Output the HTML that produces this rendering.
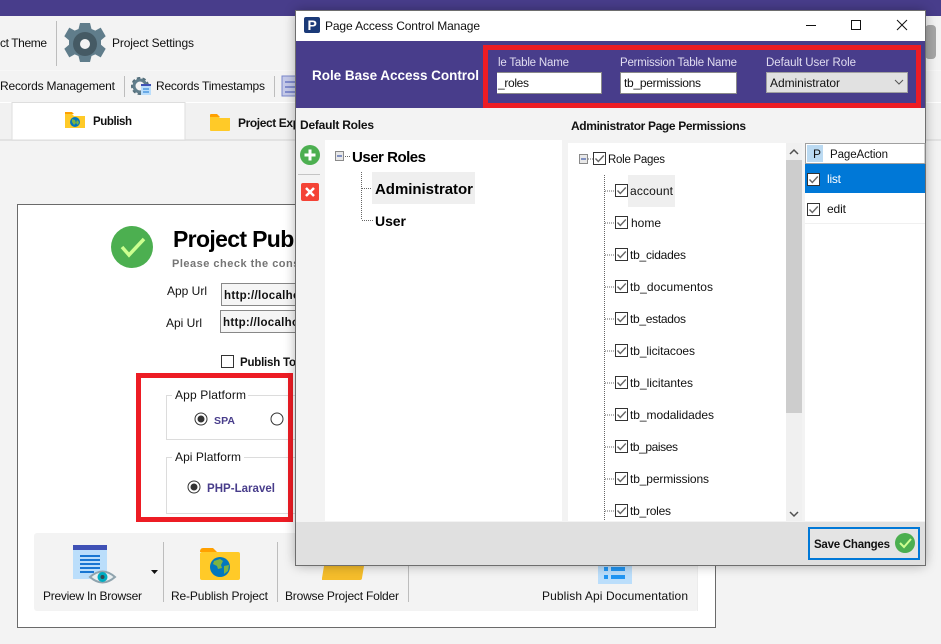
<!DOCTYPE html>
<html><head><meta charset="utf-8"><style>
html,body{margin:0;padding:0;background:#f3f3f3;overflow:hidden}
svg{display:block}
text{font-family:"Liberation Sans",sans-serif;font-size:12px;fill:#111}
.b{font-weight:bold}
.s{font-size:11.500px}
.w{fill:#fff}
.l{fill:#e0dcf0;font-size:11.500px}
.p{fill:#483d8b;font-weight:bold;font-size:11.500px}
.t{font-size:15px;font-weight:bold;fill:#000}
</style></head><body>
<svg xmlns="http://www.w3.org/2000/svg" width="941" height="644" viewBox="0 0 941 644">
<defs>
<filter id="s" x="-5%" y="-5%" width="110%" height="110%"><feGaussianBlur stdDeviation="6"/></filter>
<g id="c"><rect x="0.500" y="0.500" width="12" height="12" fill="#fff" stroke="#333"/><path d="M2.500 6.500l2.800 3 5.500-6" fill="none" stroke="#666" stroke-width="1.400"/></g>
</defs>
<rect width="941" height="644" fill="#f3f3f3"/>
<rect width="941" height="16" fill="#483d8b"/>
<rect x="925" y="25" width="11" height="34" rx="4" fill="#a6a6a6"/>
<rect y="70" width="941" height="1" fill="#f7f7f7"/>
<rect y="102" width="941" height="1" fill="#fff"/>
<rect y="103" width="941" height="36" fill="#f1f1f1"/>
<rect y="139" width="941" height="2" fill="#e2e2e2"/>

<text x="0" y="47" textLength="47">ct Theme</text>
<rect x="56" y="21" width="1" height="45" fill="#bdbdbd"/>
<path d="M80 23h10l1.500 6 3.800 1.600 5.400-3 5 8.600-4.700 4.100v4.400l4.700 4.100-5 8.600-5.400-3-3.800 1.600-1.500 6h-10l-1.500-6-3.800-1.600-5.400 3-5-8.600 4.700-4.100v-4.400l-4.700-4.100 5-8.600 5.400 3 3.800-1.600z" fill="#607d8b"/>
<circle cx="85" cy="44" r="12" fill="#455a64"/><circle cx="85" cy="44" r="5" fill="#f3f3f3"/>
<text x="112" y="47" textLength="82">Project Settings</text>

<text x="0" y="90" textLength="115">Records Management</text>
<rect x="124" y="76" width="1" height="21" fill="#bdbdbd"/>
<circle cx="140" cy="86" r="7" fill="none" stroke="#546e7a" stroke-width="4" stroke-dasharray="3 2"/><circle cx="140" cy="86" r="6" fill="none" stroke="#607d8b" stroke-width="3"/>
<rect x="141" y="84" width="10" height="11" fill="#bbdefb"/><rect x="141" y="84" width="10" height="2" fill="#3f51b5"/><path d="M143 89h6M143 92h6" stroke="#1976d2"/>
<text x="156" y="90" textLength="109">Records Timestamps</text>
<rect x="274" y="76" width="1" height="21" fill="#bdbdbd"/>
<rect x="282" y="76" width="16" height="20" fill="#c5cae9" stroke="#7986cb"/><path d="M285 82h10M285 87h10M285 92h10" stroke="#3f51b5"/>

<rect x="12" y="102.500" width="173" height="37.500" fill="#fff" stroke="#dedede"/>
<path d="M65 114h7l2 2h11v12H65z" fill="#ffca28"/><path d="M65 112h7l2 2H65z" fill="#ffa000"/><circle cx="75" cy="122" r="5" fill="#0277bd"/><path d="M72 119l3 1 1 3-2 2-2-3zM77 120l2 2-1 3-2-2z" fill="#7cb342"/>
<text x="93" y="125" class="b s" textLength="39">Publish</text>
<path d="M210 116h8l2 2h10v12q0 1-1 1h-18q-1 0-1-1z" fill="#ffca28"/><path d="M210 115q0-1 1-1h6l3 3h-10z" fill="#ffa000"/>
<text x="238" y="127" class="b" textLength="62">Project Exp</text>

<rect x="17.500" y="204.500" width="698" height="423" fill="#fff" stroke="#6a6a6a"/>
<circle cx="132" cy="247" r="21" fill="#4caf50"/><path d="M122 247l7 8 15-16" fill="none" stroke="#ccff90" stroke-width="3.500"/>
<text x="173" y="247" class="b" style="font-size:23px;fill:#000" textLength="127">Project Publ</text>
<text x="172" y="267" class="b" style="font-size:11px;fill:#757575" textLength="134">Please check the conse</text>
<text x="167" y="295" textLength="40">App Url</text>
<text x="166" y="327" textLength="36">Api Url</text>
<rect x="221.500" y="283.500" width="90" height="22" fill="#f5f5f5" stroke="#888"/>
<rect x="220.500" y="310.500" width="90" height="22" fill="#f5f5f5" stroke="#888"/>
<text x="224" y="299" class="b s" textLength="76">http://localho</text>
<text x="223" y="326" class="b s" textLength="76">http://localho</text>
<rect x="221.500" y="355.500" width="12" height="12" fill="#fff" stroke="#333"/>
<text x="240" y="366" class="b s" textLength="56">Publish To</text>

<rect x="166.500" y="395.500" width="170" height="44" fill="#fff" stroke="#dcdcdc"/>
<rect x="172" y="390" width="76" height="10" fill="#fff"/>
<text x="175" y="399" textLength="71">App Platform</text>
<circle cx="201" cy="419" r="6" fill="#fff" stroke="#333"/><circle cx="201" cy="419" r="3.500" fill="#333"/>
<text x="214" y="424" class="p" style="font-size:10.500px" textLength="21">SPA</text>
<circle cx="277" cy="419" r="6" fill="#fff" stroke="#333"/>
<rect x="166.500" y="457.500" width="170" height="56" fill="#fff" stroke="#dcdcdc"/>
<rect x="172" y="452" width="72" height="10" fill="#fff"/>
<text x="175" y="461" textLength="66">Api Platform</text>
<circle cx="194" cy="487" r="6" fill="#fff" stroke="#333"/><circle cx="194" cy="487" r="3.500" fill="#333"/>
<text x="207" y="492" class="p" textLength="68">PHP-Laravel</text>
<rect x="138.500" y="375.500" width="152" height="144" fill="none" stroke="#ed1c24" stroke-width="5"/>

<rect x="34" y="533" width="664" height="78" rx="3" fill="#f3f3f3"/>
<rect x="73" y="545" width="34" height="34" fill="#bbdefb"/><rect x="73" y="545" width="34" height="5" fill="#3f51b5"/>
<path d="M80 556h20M80 560h20M80 564h20M80 568h20M80 572h14" stroke="#1976d2" stroke-width="2"/>
<path d="M90 577q12.500-11 25 0q-12.500 11-25 0z" fill="#e8eef0" stroke="#90a4ae" stroke-width="2"/><circle cx="102.500" cy="577" r="5" fill="#00acc1"/><circle cx="102.500" cy="577" r="2" fill="#37474f"/>
<path d="M151 570h7l-3.500 4z" fill="#111"/>
<text x="43" y="600" textLength="99">Preview In Browser</text>
<rect x="163" y="542" width="1" height="60" fill="#bdbdbd"/>
<path d="M200 552q0-4 3-4h10l4 4z" fill="#ffa000"/><rect x="200" y="552" width="40" height="28" rx="2" fill="#ffca28"/>
<circle cx="220" cy="567" r="10" fill="#0277bd"/><path d="M214 561l6-2 3 2-2 4 1 3-4 1-1-3-4-2zM224 566l5-1-1 6-4 3z" fill="#7cb342"/>
<text x="171" y="600" textLength="97">Re-Publish Project</text>
<rect x="277" y="542" width="1" height="60" fill="#bdbdbd"/>
<path d="M322 580h38q2 0 2-2l3-18h-40l-3 18z" fill="#f5bd2b"/>
<text x="285" y="600" textLength="114">Browse Project Folder</text>
<rect x="408" y="542" width="1" height="60" fill="#bdbdbd"/>
<rect x="598" y="560" width="34" height="24" fill="#bbdefb"/>
<path d="M604 567h4v4h-4zM611 567h14v4h-14zM604 575h4v4h-4zM611 575h14v4h-14z" fill="#2196f3"/>
<text x="542" y="600" textLength="146">Publish Api Documentation</text>
<rect x="697" y="533" width="1" height="78" fill="#ececec"/>

<!-- dialog -->
<rect x="296" y="11" width="629" height="554" fill="#000" opacity=".35" filter="url(#s)"/>
<rect x="295.500" y="10.500" width="630" height="555" fill="#f3f3f3" stroke="#6e6e6e"/>
<rect x="296" y="11" width="629" height="30" fill="#fff"/>
<rect x="304" y="17" width="16" height="16" rx="2" fill="#1b3a78"/>
<text x="307.500" y="30" class="b w" style="font-size:14px">P</text>
<text x="325" y="30" textLength="155">Page Access Control Manage</text>
<rect x="806" y="25" width="10" height="1" fill="#111"/>
<rect x="851.500" y="20.500" width="9" height="9" fill="none" stroke="#111"/>
<path d="M897 20l10 10M907 20l-10 10" stroke="#111" fill="none"/>

<rect x="296" y="41" width="629" height="67" fill="#483d8b"/>
<text x="312" y="80" class="b w" style="font-size:13.500px" textLength="167">Role Base Access Control</text>
<text x="498" y="66" class="l" textLength="71">le Table Name</text>
<rect x="497.500" y="72.500" width="104" height="21" fill="#fff" stroke="#8a8a8a"/><rect x="497" y="73" width="1" height="20" fill="#fff"/>
<text x="498" y="87" textLength="31">_roles</text>
<text x="620" y="66" class="l" textLength="117">Permission Table Name</text>
<rect x="620.500" y="72.500" width="116" height="21" fill="#fff" stroke="#8a8a8a"/>
<text x="624" y="87" textLength="77">tb_permissions</text>
<text x="766" y="66" class="l" textLength="90">Default User Role</text>
<rect x="766.500" y="72.500" width="141" height="20" fill="#e1e1e1" stroke="#a0a0a0"/>
<text x="770" y="87" textLength="70">Administrator</text>
<path d="M895 80l4 4 4-4" fill="none" stroke="#555"/>
<rect x="485.500" y="47.500" width="433" height="58" fill="none" stroke="#ed1c24" stroke-width="5"/>

<text x="300" y="129" class="b" textLength="74">Default Roles</text>
<text x="571" y="130" class="b" textLength="175">Administrator Page Permissions</text>
<circle cx="310" cy="155" r="10" fill="#4caf50"/><path d="M304.500 155h11M310 149.500v11" stroke="#fff" stroke-width="3"/>
<rect x="298" y="174" width="22" height="1" fill="#c4c4c4"/>
<rect x="301" y="183" width="18" height="18" rx="2" fill="#f44336"/><path d="M306 188l8 8M314 188l-8 8" stroke="#fff" stroke-width="2.500"/>

<rect x="325" y="140" width="237" height="381" fill="#fff"/>
<rect x="335.500" y="151.500" width="8" height="9" fill="#e8e8e8" stroke="#8a8a8a"/><path d="M337 156h5" stroke="#1a3a9a"/>
<path d="M345 156.500h6M361.500 172v48M362 188.500h10M362 220.500h11" stroke="#666" stroke-dasharray="1 1" fill="none"/>
<text x="352" y="162" class="t" textLength="74">User Roles</text>
<rect x="372" y="172" width="103" height="32" fill="#efefef"/>
<text x="375" y="194" class="t" textLength="98">Administrator</text>
<text x="375" y="226" class="t" style="font-size:14px" textLength="31">User</text>

<rect x="568" y="143" width="218" height="378" fill="#fff"/>
<rect x="786" y="143" width="16" height="378" fill="#f0f0f0"/>
<rect x="786" y="160" width="16" height="253" fill="#cdcdcd"/>
<path d="M790 154l4-4 4 4M790 512l4 4 4-4" fill="none" stroke="#505050" stroke-width="1.500"/>
<rect x="579.500" y="154.500" width="8" height="9" fill="#e8e8e8" stroke="#8a8a8a"/><path d="M581 159h5" stroke="#1a3a9a"/>
<path d="M588 159h5M604.500 175v346" stroke="#666" stroke-dasharray="1 1" fill="none"/>
<use href="#c" x="593" y="152"/>
<text x="608" y="163" class="s" textLength="57">Role Pages</text>
<rect x="628" y="175" width="47" height="32" fill="#efefef"/>
<path d="M605 191h10M605 223h10M605 255h10M605 287h10M605 319h10M605 351h10M605 383h10M605 415h10M605 447h10M605 479h10M605 511h10" stroke="#666" stroke-dasharray="1 1" fill="none"/>
<use href="#c" x="615" y="184"/><text x="630" y="195" textLength="43">account</text>
<use href="#c" x="615" y="216"/><text x="631" y="227" textLength="30">home</text>
<use href="#c" x="615" y="248"/><text x="630" y="259" textLength="56">tb_cidades</text>
<use href="#c" x="615" y="280"/><text x="630" y="291" textLength="83">tb_documentos</text>
<use href="#c" x="615" y="312"/><text x="630" y="323" textLength="56">tb_estados</text>
<use href="#c" x="615" y="344"/><text x="630" y="355" textLength="65">tb_licitacoes</text>
<use href="#c" x="615" y="376"/><text x="630" y="387" textLength="63">tb_licitantes</text>
<use href="#c" x="615" y="408"/><text x="630" y="419" textLength="84">tb_modalidades</text>
<use href="#c" x="615" y="440"/><text x="630" y="451" textLength="48">tb_paises</text>
<use href="#c" x="615" y="472"/><text x="630" y="483" textLength="79">tb_permissions</text>
<use href="#c" x="615" y="504"/><text x="630" y="515" textLength="41">tb_roles</text>

<rect x="805" y="143" width="120" height="378" fill="#fff"/>
<rect x="805.500" y="143.500" width="119.500" height="20" fill="#fff" stroke="#a0a0a0"/>
<rect x="807" y="145" width="16" height="17" fill="#bbdaf2"/>
<text x="813" y="158">P</text>
<text x="830" y="158" class="s" textLength="58">PageAction</text>
<rect x="805" y="164" width="120" height="29" fill="#0078d7"/>
<use href="#c" x="807" y="173"/>
<text x="827" y="183" class="w" textLength="14">list</text>
<rect x="805" y="223" width="120" height="1" fill="#f0f0f0"/>
<use href="#c" x="807" y="203"/>
<text x="827" y="213" textLength="19">edit</text>

<rect x="296" y="522" width="629" height="43" fill="#e0e0e0"/>
<rect x="809" y="528" width="110" height="31" fill="#e4e4e4" stroke="#0078d7" stroke-width="2"/>
<text x="814" y="548" class="b s" textLength="76">Save Changes</text>
<circle cx="905" cy="543" r="10" fill="#4caf50"/><path d="M900 543l4 4 7-8" fill="none" stroke="#ccff90" stroke-width="2"/>
</svg>
</body></html>
